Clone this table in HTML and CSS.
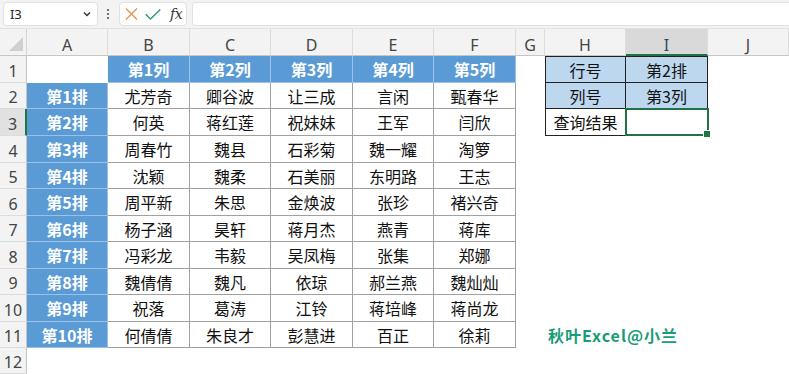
FILE: index.html
```html
<!DOCTYPE html>
<html lang="zh">
<head>
<meta charset="utf-8">
<link rel="stylesheet" href="styles.css">
</head>
<body>
<div class="app">
  <div class="fbar">
    <div class="namebox">
      <span class="nb-text">I3</span>
      <svg class="chev" width="8" height="6" viewBox="0 0 8 6"><path d="M1 1.5 L4 4.5 L7 1.5" fill="none" stroke="#333" stroke-width="1.4"/></svg>
    </div>
    <svg class="dots" width="4" height="12" viewBox="0 0 4 12"><circle cx="2" cy="2" r="1.1" fill="#555"/><circle cx="2" cy="6" r="1.1" fill="#555"/><circle cx="2" cy="10" r="1.1" fill="#555"/></svg>
    <div class="fbtns">
      <svg width="13" height="12" viewBox="0 0 13 12"><path d="M1 0.5 L12 11.5 M12 0.5 L1 11.5" stroke="#e8914a" stroke-width="1.3" fill="none"/></svg>
      <svg width="16" height="11" viewBox="0 0 16 11"><path d="M0.7 5.2 L5.5 10 L15.3 0.6" stroke="#2d9a76" stroke-width="1.4" fill="none"/></svg>
      <span class="fx">fx</span>
    </div>
    <div class="finput"></div>
  </div>
  <div class="sheet">
    <div class="corner"><svg width="16" height="16" viewBox="0 0 16 16"><path d="M1 15 L15 15 L15 1 Z" fill="#d0d0d0"/></svg></div>
    <div class="ch">A</div><div class="ch">B</div><div class="ch">C</div><div class="ch">D</div><div class="ch">E</div><div class="ch">F</div><div class="ch">G</div><div class="ch">H</div><div class="ch sel">I</div><div class="ch">J</div>

    <div class="rh">1</div><div class="c"></div><div class="b">第1列</div><div class="b">第2列</div><div class="b">第3列</div><div class="b">第4列</div><div class="b">第5列</div><div class="c"></div><div class="lb lft top">行号</div><div class="lb top">第2排</div><div class="c"></div>

    <div class="rh">2</div><div class="b">第1排</div><div class="t">尤芳奇</div><div class="t">卿谷波</div><div class="t">让三成</div><div class="t">言闲</div><div class="t">甄春华</div><div class="c"></div><div class="lb lft">列号</div><div class="lb">第3列</div><div class="c"></div>

    <div class="rh sel">3</div><div class="b">第2排</div><div class="t">何英</div><div class="t">蒋红莲</div><div class="t">祝妹妹</div><div class="t">王军</div><div class="t">闫欣</div><div class="c"></div><div class="q lft">查询结果</div><div class="s"></div><div class="c"></div>

    <div class="rh">4</div><div class="b">第3排</div><div class="t">周春竹</div><div class="t">魏县</div><div class="t">石彩菊</div><div class="t">魏一耀</div><div class="t">淘箩</div><div class="c"></div><div class="c"></div><div class="c"></div><div class="c"></div>

    <div class="rh">5</div><div class="b">第4排</div><div class="t">沈颖</div><div class="t">魏柔</div><div class="t">石美丽</div><div class="t">东明路</div><div class="t">王志</div><div class="c"></div><div class="c"></div><div class="c"></div><div class="c"></div>

    <div class="rh">6</div><div class="b">第5排</div><div class="t">周平新</div><div class="t">朱思</div><div class="t">金焕波</div><div class="t">张珍</div><div class="t">褚兴奇</div><div class="c"></div><div class="c"></div><div class="c"></div><div class="c"></div>

    <div class="rh">7</div><div class="b">第6排</div><div class="t">杨子涵</div><div class="t">昊轩</div><div class="t">蒋月杰</div><div class="t">燕青</div><div class="t">蒋库</div><div class="c"></div><div class="c"></div><div class="c"></div><div class="c"></div>

    <div class="rh">8</div><div class="b">第7排</div><div class="t">冯彩龙</div><div class="t">韦毅</div><div class="t">吴凤梅</div><div class="t">张集</div><div class="t">郑娜</div><div class="c"></div><div class="c"></div><div class="c"></div><div class="c"></div>

    <div class="rh">9</div><div class="b">第8排</div><div class="t">魏倩倩</div><div class="t">魏凡</div><div class="t">依琼</div><div class="t">郝兰燕</div><div class="t">魏灿灿</div><div class="c"></div><div class="c"></div><div class="c"></div><div class="c"></div>

    <div class="rh">10</div><div class="b">第9排</div><div class="t">祝落</div><div class="t">葛涛</div><div class="t">江铃</div><div class="t">蒋培峰</div><div class="t">蒋尚龙</div><div class="c"></div><div class="c"></div><div class="c"></div><div class="c"></div>

    <div class="rh">11</div><div class="b">第10排</div><div class="t">何倩倩</div><div class="t">朱良才</div><div class="t">彭慧进</div><div class="t">百正</div><div class="t">徐莉</div><div class="c"></div><div class="c wm">秋叶Excel@小兰</div><div class="c"></div><div class="c"></div>

    <div class="rh">12</div><div class="c"></div><div class="c"></div><div class="c"></div><div class="c"></div><div class="c"></div><div class="c"></div><div class="c"></div><div class="c"></div><div class="c"></div><div class="c"></div>
  </div>
</div>
</body>
</html>
```

FILE: styles.css
```css
* { box-sizing: border-box; }
html, body { margin: 0; padding: 0; background: #fff; }
body { width: 789px; height: 374px; overflow: hidden; font-family: "Noto Sans CJK SC", "Noto Sans", sans-serif; }

.app { width: 789px; }

.fbar {
  height: 29px;
  background: #f3f3f3;
  display: flex;
  align-items: center;
  padding: 0 0 0 3px;
  border-bottom: 1px solid #e2e2e2;
}
.namebox {
  width: 95px; height: 24px;
  background: #fff;
  border: 1px solid #e1e1e1;
  border-radius: 4px;
  display: flex; align-items: center; justify-content: space-between;
  padding: 0 6px 0 6px;
  font-family: "Noto Sans", sans-serif;
  font-size: 13px; color: #222;
}
.nb-text { letter-spacing: -0.2px; }
.dots { margin-left: 8px; margin-right: 9px; }
.fbtns {
  width: 68px; height: 24px;
  background: #fff;
  border: 1px solid #e1e1e1;
  border-radius: 4px;
  display: flex; align-items: center;
  padding-left: 5px; gap: 7px;
}
.fx { font-family: "DejaVu Serif", "Liberation Serif", serif; font-style: italic; font-size: 14px; color: #333; margin-left: 2px; letter-spacing: -0.5px; }
.finput {
  flex: 1; height: 24px; margin-left: 5px;
  background: #fff;
  border: 1px solid #e1e1e1; border-right: none;
  border-radius: 4px 0 0 4px;
}

.sheet {
  display: grid;
  grid-template-columns: 27px 81px 82px 81px 82px 81px 82px 29px 81px 82px 81px;
  grid-template-rows: 27px 27px 26px 27px 27px 26px 27px 26px 27px 26px 27px 26px 26px;
}
.sheet > div { display: flex; align-items: center; justify-content: center; white-space: nowrap; }

.corner { background: #f3f3f3; border-right: 1px solid #d4d4d4; border-bottom: 1px solid #c6c6c6; align-items: flex-end !important; justify-content: flex-end !important; padding: 0 2px 3px 0; }
.ch {
  background: #f3f3f3; color: #444;
  font-family: "Noto Sans", sans-serif; font-size: 16px;
  border-right: 1px solid #dcdcdc; border-bottom: 1px solid #c6c6c6;
  padding-top: 5px;
}
.ch.sel { background: #d9d9d9; border-bottom: 2px solid #217346; color: #2b4f5f; padding-top: 6px; }
.rh {
  background: #f3f3f3; color: #444;
  font-family: "Noto Sans", sans-serif; font-size: 16px;
  border-right: 1px solid #c6c6c6; border-bottom: 1px solid #dcdcdc;
  padding-top: 3px;
}
.rh.sel { background: #e1e1e1; border-right: 2px solid #217346; }

.c { background: transparent; }
.t {
  background: #fff; color: #111; font-size: 16px;
  border-right: 1px solid #a0a0a0; border-bottom: 1px solid #a0a0a0;
}
.b {
  background: #5b9bd5; color: #fff; font-size: 16px; font-weight: 700;
  border-right: 1px solid #9ec0e4; border-bottom: 1px solid #9ec0e4;
}
.lb {
  background: #bdd7ee; color: #111; font-size: 16px;
  border-right: 1px solid #222; border-bottom: 1px solid #222;
}
.q {
  background: #fff; color: #111; font-size: 16px;
  border-right: 1px solid #222; border-bottom: 1px solid #222;
}
.lft { border-left: 1px solid #222; }
.top { border-top: 1px solid #222; }
.s {
  position: relative; background: #fff;
  border: 2px solid #217346; margin: -1px -1px 0 -1px;
}
.s::after {
  content: ""; position: absolute; right: -4px; bottom: -4px;
  width: 6px; height: 6px; background: #217346; border: 1px solid #fff;
}
.wm {
  justify-content: flex-start !important; padding-left: 3px;
  color: #199c78; font-weight: 700; font-size: 16px; letter-spacing: 1px;
  overflow: visible;
}
```
